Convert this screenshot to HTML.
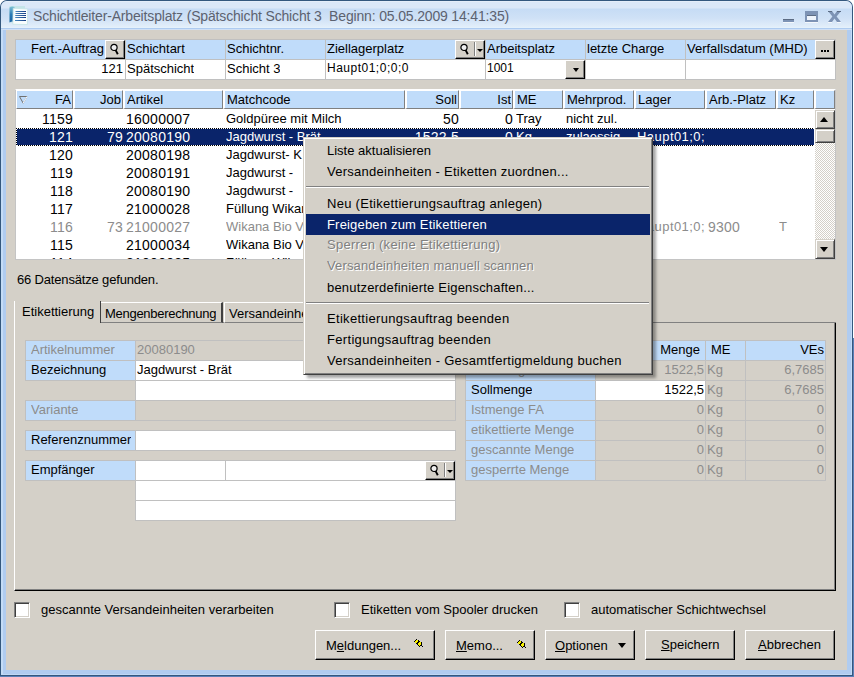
<!DOCTYPE html><html><head><meta charset="utf-8"><style>
*{box-sizing:border-box;margin:0;padding:0}
html,body{width:854px;height:677px;overflow:hidden;background:#fff;font-family:"Liberation Sans",sans-serif;font-size:13px;color:#000}
.ab{position:absolute}
.t{position:absolute;white-space:pre;line-height:18px;height:18px;overflow:hidden}
.r{text-align:right}
.g{color:#8c8c8c}
.btn{position:absolute;background:#d4d0c8;border-top:1px solid #fff;border-left:1px solid #fff;border-right:1px solid #000;border-bottom:1px solid #000;box-shadow:inset -1px -1px 0 #808080}
.hd{position:absolute;background:#c0dcfa;border-left:1px solid #fff;border-top:1px solid #fff;border-right:1px solid #808080;border-bottom:1px solid #808080}
</style></head><body>
<div class="ab" style="left:853px;top:0;width:1px;height:338px;background:#fff"></div>
<div class="ab" style="left:853px;top:338px;width:1px;height:339px;background:#5a80b8"></div>
<div class="ab" style="left:0;top:0;width:853px;height:677px;border:1px solid #34587e;border-bottom:0;border-radius:7px 7px 0 0;background:#b0ccf0"></div>
<div class="ab" style="left:1px;top:1px;width:851px;height:29px;border-radius:6px 6px 0 0;background:linear-gradient(#eef4fb 0,#dbe8f8 1px,#dbe8f8 7px,#c6dcf5 8px,#cfe1f6 17px,#e2eefa 26px,#e6f4fc 27px,#aecbf0 27px,#aecbf0 28px,#d0e0f5 28px)"></div>
<div class="ab" style="left:1px;top:30px;width:2px;height:644px;background:#c4dcf6"></div>
<div class="ab" style="left:851px;top:30px;width:1px;height:644px;background:#c4dcf8"></div>
<div class="ab" style="left:1px;top:674px;width:851px;height:1px;background:#c0d8f5"></div>
<div class="ab" style="left:0;top:675px;width:853px;height:1px;background:#34587e"></div>
<div class="ab" style="left:0;top:676px;width:854px;height:1px;background:#5a80b8"></div>
<div class="ab" style="left:6px;top:30px;width:841px;height:640px;background:#d4d0c8"></div>
<svg class="ab" style="left:8px;top:5px" width="22" height="22" viewBox="0 0 22 22">
<defs><linearGradient id="sp" x1="0" x2="0" y1="0" y2="1"><stop offset="0" stop-color="#7cc0d4"/><stop offset="0.5" stop-color="#2a7cb4"/><stop offset="1" stop-color="#1a64a4"/></linearGradient>
<linearGradient id="ln" x1="0" x2="1" y1="0" y2="0"><stop offset="0" stop-color="#4a8cc0"/><stop offset="1" stop-color="#143c84"/></linearGradient></defs>
<path d="M1.5 1 L17 1 L17 17.5 L1.5 17.5 Z" fill="#c4e4e8"/>
<path d="M1.5 2.5 Q4 1 6.5 2 L6.5 17 Q4 16 1.5 17.5 Z" fill="url(#sp)"/>
<path d="M5.2 3.2 L19.6 4 L19.4 19.6 L4.8 19.2 Z" fill="#f8fdfd" stroke="#c4e4e4" stroke-width="0.8"/>
<path d="M7.5 6.5 H18 M7.5 8.5 H18 M7.2 10.5 H18 M7.2 12.5 H18 M7 15.5 H18" stroke="url(#ln)" stroke-width="1.2"/>
</svg>
<div class="t" style="left:33px;top:7px;font-size:14px;line-height:18px;height:20px;color:#5c6270;letter-spacing:-0.16px">Schichtleiter-Arbeitsplatz (Spätschicht Schicht 3  Beginn: 05.05.2009 14:41:35)</div>
<div class="ab" style="left:783px;top:19px;width:11px;height:3px;background:#7d93b5;border-top:1px solid #5c6c84;box-shadow:0 1px 0 #f4f8fc"></div>
<div class="ab" style="left:805px;top:11px;width:13px;height:11px;border:2px solid #7d93b5;border-top:4px solid #7d93b5;background:#eef4fc;box-shadow:inset 0 1px 0 #5c6c84,0 1px 0 #f4f8fc"></div>
<svg class="ab" style="left:828px;top:11px" width="14" height="12" viewBox="0 0 14 12"><path d="M0 0 H4 L6.5 3.6 L9 0 H13 L8.6 5.5 L13 11 H9 L6.5 7.4 L4 11 H0 L4.4 5.5 Z" fill="#7d93b5"/><path d="M0 0.5 H4 M9 0.5 H13" stroke="#5c6c84" stroke-width="1"/><path d="M0 11.5 H4 M9 11.5 H13" stroke="#f4f8fc" stroke-width="1"/></svg>
<div class="ab" style="left:15px;top:39px;width:821px;height:41px;background:#fff;border:1px solid #c0c0c0"></div>
<div class="ab" style="left:16px;top:40px;width:819px;height:20px;background:#c0dcfa;border-bottom:1px solid #c0c0c0"></div>
<div class="ab" style="left:125px;top:40px;width:1px;height:39px;background:#c0c0c0"></div>
<div class="ab" style="left:225px;top:40px;width:1px;height:39px;background:#c0c0c0"></div>
<div class="ab" style="left:325px;top:40px;width:1px;height:39px;background:#c0c0c0"></div>
<div class="ab" style="left:485px;top:40px;width:1px;height:39px;background:#c0c0c0"></div>
<div class="ab" style="left:585px;top:40px;width:1px;height:39px;background:#c0c0c0"></div>
<div class="ab" style="left:685px;top:40px;width:1px;height:39px;background:#c0c0c0"></div>
<div class="t r" style="left:16px;top:39px;width:88px;line-height:19px">Fert.-Auftrag</div>
<div class="t" style="left:127px;top:39px;line-height:19px">Schichtart</div>
<div class="t" style="left:227px;top:39px;line-height:19px">Schichtnr.</div>
<div class="t" style="left:327px;top:39px;line-height:19px">Ziellagerplatz</div>
<div class="t" style="left:487px;top:39px;line-height:19px">Arbeitsplatz</div>
<div class="t" style="left:587px;top:39px;line-height:19px">letzte Charge</div>
<div class="t" style="left:687px;top:39px;line-height:19px">Verfallsdatum (MHD)</div>
<div class="btn" style="left:105px;top:40px;width:20px;height:19px"></div>
<svg class="ab" style="left:110px;top:43px" width="12" height="13" viewBox="0 0 12 13"><circle cx="4.0" cy="4.4" r="3.1" fill="#eeeeee" stroke="#000" stroke-width="1.2"/><path d="M5.6 7.1 L7.8 11.2" stroke="#000" stroke-width="1.9"/></svg>
<div class="btn" style="left:455px;top:40px;width:30px;height:19px"></div>
<svg class="ab" style="left:460px;top:43px" width="12" height="13" viewBox="0 0 12 13"><circle cx="4.0" cy="4.4" r="3.1" fill="#eeeeee" stroke="#000" stroke-width="1.2"/><path d="M5.6 7.1 L7.8 11.2" stroke="#000" stroke-width="1.9"/></svg>
<div class="ab" style="left:474px;top:42px;width:1px;height:14px;background:#808080"></div><div class="ab" style="left:475px;top:42px;width:1px;height:14px;background:#fff"></div>
<div class="ab" style="left:477px;top:49px;width:0;height:0;border-left:3px solid transparent;border-right:3px solid transparent;border-top:3px solid #000"></div>
<div class="btn" style="left:815px;top:40px;width:20px;height:19px"></div>
<div class="ab" style="left:821px;top:50px;width:2px;height:2px;background:#000"></div>
<div class="ab" style="left:824px;top:50px;width:2px;height:2px;background:#000"></div>
<div class="ab" style="left:827px;top:50px;width:2px;height:2px;background:#000"></div>
<div class="t r" style="left:16px;top:59px;width:107px;line-height:19px">121</div>
<div class="t" style="left:127px;top:59px;line-height:19px">Spätschicht</div>
<div class="t" style="left:227px;top:59px;line-height:19px">Schicht 3</div>
<div class="t" style="left:327px;top:59px;line-height:19px;font-size:12px;letter-spacing:0.5px">Haupt01;0;0;0</div>
<div class="t" style="left:487px;top:59px;line-height:19px;font-size:12px">1001</div>
<div class="btn" style="left:565px;top:60px;width:20px;height:19px"></div>
<div class="ab" style="left:573px;top:68px;width:0;height:0;border-left:3.5px solid transparent;border-right:3.5px solid transparent;border-top:4px solid #000"></div>
<div class="ab" style="left:15px;top:89px;width:821px;height:171px;background:#fff;border-top:1px solid #fff;border-left:1px solid #c4c4c4;border-right:1px solid #c4c4c4;border-bottom:1px solid #c4c4c4"></div>
<div class="hd" style="left:16px;top:90px;width:57px;height:19px;"></div>
<div class="t r" style="left:16px;top:90px;width:55px;line-height:19px">FA</div>
<div class="hd" style="left:73px;top:90px;width:50px;height:19px;border-left:2px solid #fff;"></div>
<div class="t r" style="left:73px;top:90px;width:48px;line-height:19px">Job</div>
<div class="hd" style="left:123px;top:90px;width:100px;height:19px;border-left:2px solid #fff;"></div>
<div class="t" style="left:127px;top:90px;line-height:19px">Artikel</div>
<div class="hd" style="left:223px;top:90px;width:182px;height:19px;border-left:2px solid #fff;"></div>
<div class="t" style="left:227px;top:90px;line-height:19px">Matchcode</div>
<div class="hd" style="left:405px;top:90px;width:54px;height:19px;border-left:2px solid #fff;"></div>
<div class="t r" style="left:405px;top:90px;width:52px;line-height:19px">Soll</div>
<div class="hd" style="left:459px;top:90px;width:54px;height:19px;border-left:2px solid #fff;"></div>
<div class="t r" style="left:459px;top:90px;width:52px;line-height:19px">Ist</div>
<div class="hd" style="left:513px;top:90px;width:50px;height:19px;border-left:2px solid #fff;"></div>
<div class="t" style="left:517px;top:90px;line-height:19px">ME</div>
<div class="hd" style="left:563px;top:90px;width:71px;height:19px;border-left:2px solid #fff;"></div>
<div class="t" style="left:567px;top:90px;line-height:19px">Mehrprod.</div>
<div class="hd" style="left:634px;top:90px;width:71px;height:19px;border-left:2px solid #fff;"></div>
<div class="t" style="left:638px;top:90px;line-height:19px">Lager</div>
<div class="hd" style="left:705px;top:90px;width:71px;height:19px;border-left:2px solid #fff;"></div>
<div class="t" style="left:709px;top:90px;line-height:19px">Arb.-Platz</div>
<div class="hd" style="left:776px;top:90px;width:38px;height:19px;border-left:2px solid #fff;"></div>
<div class="t" style="left:780px;top:90px;line-height:19px">Kz</div>
<div class="hd" style="left:814px;top:90px;width:21px;height:19px;border-left:2px solid #fff"></div>
<svg class="ab" style="left:19px;top:96px" width="9" height="8" viewBox="0 0 9 8"><path d="M0.5 0.5 H8 L4.2 7.2 Z" fill="none" stroke="#707070" stroke-width="1"/><path d="M8 0.5 L4.2 7.2" stroke="#fff" stroke-width="1"/></svg>
<div class="ab" style="left:16px;top:109px;width:799px;height:150px;overflow:hidden">
<div class="t r" style="left:0px;top:1px;width:57px;color:#000;font-size:14px;letter-spacing:0.25px;">1159</div>
<div class="t" style="left:110px;top:1px;width:97px;color:#000;font-size:14px;letter-spacing:0.25px;">16000007</div>
<div class="t" style="left:210px;top:1px;width:179px;color:#000;">Goldpüree mit Milch</div>
<div class="t r" style="left:389px;top:1px;width:54px;color:#000;font-size:14px;letter-spacing:0.25px;">50</div>
<div class="t r" style="left:443px;top:1px;width:54px;color:#000;font-size:14px;letter-spacing:0.25px;">0</div>
<div class="t" style="left:500px;top:1px;width:47px;color:#000;">Tray</div>
<div class="t" style="left:550px;top:1px;width:68px;color:#000;">nicht zul.</div>
<div class="ab" style="left:0;top:19px;width:798px;height:18px;background:#0a246a"></div>
<div class="ab" style="left:0;top:19px;width:798px;height:1px;background:repeating-linear-gradient(90deg,#000 0 1px,#fff 1px 2px)"></div>
<div class="ab" style="left:0;top:36px;width:798px;height:1px;background:repeating-linear-gradient(90deg,#000 0 1px,#fff 1px 2px)"></div>
<div class="ab" style="left:0;top:19px;width:1px;height:18px;background:repeating-linear-gradient(180deg,#000 0 1px,#fff 1px 2px)"></div>
<div class="t r" style="left:0px;top:19px;width:57px;color:#fff;font-size:14px;letter-spacing:0.25px;">121</div>
<div class="t r" style="left:57px;top:19px;width:50px;color:#fff;font-size:14px;letter-spacing:0.25px;">79</div>
<div class="t" style="left:110px;top:19px;width:97px;color:#fff;font-size:14px;letter-spacing:0.25px;">20080190</div>
<div class="t" style="left:210px;top:19px;width:179px;color:#fff;">Jagdwurst - Brät</div>
<div class="t r" style="left:389px;top:19px;width:54px;color:#fff;font-size:14px;letter-spacing:0.25px;">1522,5</div>
<div class="t r" style="left:443px;top:19px;width:54px;color:#fff;font-size:14px;letter-spacing:0.25px;">0</div>
<div class="t" style="left:500px;top:19px;width:47px;color:#fff;">Kg</div>
<div class="t" style="left:550px;top:19px;width:68px;color:#fff;">zulaessig</div>
<div class="t" style="left:621px;top:19px;width:68px;color:#fff;letter-spacing:0.45px;">Haupt01;0;</div>
<div class="t r" style="left:0px;top:37px;width:57px;color:#000;font-size:14px;letter-spacing:0.25px;">120</div>
<div class="t" style="left:110px;top:37px;width:97px;color:#000;font-size:14px;letter-spacing:0.25px;">20080198</div>
<div class="t" style="left:210px;top:37px;width:179px;color:#000;">Jagdwurst- K</div>
<div class="t r" style="left:0px;top:55px;width:57px;color:#000;font-size:14px;letter-spacing:0.25px;">119</div>
<div class="t" style="left:110px;top:55px;width:97px;color:#000;font-size:14px;letter-spacing:0.25px;">20080191</div>
<div class="t" style="left:210px;top:55px;width:179px;color:#000;">Jagdwurst - </div>
<div class="t r" style="left:0px;top:73px;width:57px;color:#000;font-size:14px;letter-spacing:0.25px;">118</div>
<div class="t" style="left:110px;top:73px;width:97px;color:#000;font-size:14px;letter-spacing:0.25px;">20080190</div>
<div class="t" style="left:210px;top:73px;width:179px;color:#000;">Jagdwurst - </div>
<div class="t r" style="left:0px;top:91px;width:57px;color:#000;font-size:14px;letter-spacing:0.25px;">117</div>
<div class="t" style="left:110px;top:91px;width:97px;color:#000;font-size:14px;letter-spacing:0.25px;">21000028</div>
<div class="t" style="left:210px;top:91px;width:179px;color:#000;">Füllung Wikana</div>
<div class="t r" style="left:0px;top:109px;width:57px;color:#8c8c8c;font-size:14px;letter-spacing:0.25px;">116</div>
<div class="t r" style="left:57px;top:109px;width:50px;color:#8c8c8c;font-size:14px;letter-spacing:0.25px;">73</div>
<div class="t" style="left:110px;top:109px;width:97px;color:#8c8c8c;font-size:14px;letter-spacing:0.25px;">21000027</div>
<div class="t" style="left:210px;top:109px;width:179px;color:#8c8c8c;">Wikana Bio V</div>
<div class="t" style="left:621px;top:109px;width:68px;color:#8c8c8c;letter-spacing:0.45px;">Haupt01;0;</div>
<div class="t" style="left:692px;top:109px;width:68px;color:#8c8c8c;font-size:14px;letter-spacing:0.25px;">9300</div>
<div class="t" style="left:763px;top:109px;width:35px;color:#8c8c8c;">T</div>
<div class="t r" style="left:0px;top:127px;width:57px;color:#000;font-size:14px;letter-spacing:0.25px;">115</div>
<div class="t" style="left:110px;top:127px;width:97px;color:#000;font-size:14px;letter-spacing:0.25px;">21000034</div>
<div class="t" style="left:210px;top:127px;width:179px;color:#000;">Wikana Bio V</div>
<div class="t r" style="left:0px;top:145px;width:57px;color:#000;font-size:14px;letter-spacing:0.25px;">114</div>
<div class="t" style="left:110px;top:145px;width:97px;color:#000;font-size:14px;letter-spacing:0.25px;">21000035</div>
<div class="t" style="left:210px;top:145px;width:179px;color:#000;">Füllung Wikana</div>
</div>
<div class="ab" style="left:815px;top:110px;width:20px;height:149px;background-color:#e8e6e2;background-image:repeating-conic-gradient(#d4d0c8 0 25%,#fff 0 50%);background-size:2px 2px"></div>
<div class="btn" style="left:815px;top:110px;width:20px;height:19px;border-color:#d4d0c8 #404040 #404040 #d4d0c8;box-shadow:inset 1px 1px 0 #fff,inset -1px -1px 0 #808080"></div>
<div class="ab" style="left:820px;top:117px;width:0;height:0;border-left:4.5px solid transparent;border-right:4.5px solid transparent;border-bottom:5px solid #000"></div>
<div class="btn" style="left:815px;top:129px;width:20px;height:14px;border-color:#d4d0c8 #404040 #404040 #d4d0c8;box-shadow:inset 1px 1px 0 #fff,inset -1px -1px 0 #808080"></div>
<div class="btn" style="left:815px;top:239px;width:20px;height:20px;border-color:#d4d0c8 #404040 #404040 #d4d0c8;box-shadow:inset 1px 1px 0 #fff,inset -1px -1px 0 #808080"></div>
<div class="ab" style="left:820px;top:247px;width:0;height:0;border-left:4.5px solid transparent;border-right:4.5px solid transparent;border-top:5px solid #000"></div>
<div class="t" style="left:17px;top:271px;letter-spacing:-0.17px">66 Datensätze gefunden.</div>
<div class="ab" style="left:14px;top:322px;width:822px;height:269px;border-left:1px solid #fff;border-top:1px solid #fff;border-right:1px solid #000;border-bottom:1px solid #000;box-shadow:inset -1px -1px 0 #808080"></div>
<div class="ab" style="left:100px;top:322px;width:735px;height:1px;background:#808080"></div>
<div class="ab" style="left:100px;top:302px;width:123px;height:21px;border-top:1px solid #fff;border-left:1px solid #fff;border-right:2px solid #404040;border-bottom:1px solid #808080;background:#d4d0c8"></div>
<div class="ab" style="left:100px;top:301px;width:1px;height:22px;background:#404040"></div>
<div class="t" style="left:105px;top:305px;letter-spacing:-0.28px">Mengenberechnung</div>
<div class="ab" style="left:224px;top:302px;width:124px;height:21px;border-left:1px solid #fff;border-top:1px solid #fff;border-right:1px solid #404040;border-bottom:1px solid #808080;background:#d4d0c8"></div>
<div class="t" style="left:229px;top:305px">Versandeinheiten</div>
<div class="ab" style="left:14px;top:301px;width:86px;height:23px;border-left:1px solid #fff;background:#d4d0c8"></div>
<div class="t" style="left:22px;top:303px">Etikettierung</div>
<div class="ab" style="left:135px;top:340px;width:321px;height:21px;background:#d4d0c8;border:1px solid #c0c0c0"></div>
<div class="t g" style="left:137px;top:340px;line-height:19px">20080190</div>
<div class="ab" style="left:25px;top:340px;width:111px;height:21px;background:#c0dcfa;border:1px solid #c0c0c0"></div>
<div class="t g" style="left:31px;top:340px;line-height:19px">Artikelnummer</div>
<div class="ab" style="left:135px;top:360px;width:321px;height:21px;background:#fff;border:1px solid #c0c0c0"></div>
<div class="t" style="left:137px;top:360px;line-height:19px">Jagdwurst - Brät</div>
<div class="ab" style="left:25px;top:360px;width:111px;height:21px;background:#c0dcfa;border:1px solid #c0c0c0"></div>
<div class="t" style="left:31px;top:360px;line-height:19px">Bezeichnung</div>
<div class="ab" style="left:135px;top:380px;width:321px;height:21px;background:#fff;border:1px solid #c0c0c0"></div>
<div class="ab" style="left:135px;top:400px;width:321px;height:21px;background:#d4d0c8;border:1px solid #c0c0c0"></div>
<div class="ab" style="left:25px;top:400px;width:111px;height:21px;background:#c0dcfa;border:1px solid #c0c0c0"></div>
<div class="t g" style="left:31px;top:400px;line-height:19px">Variante</div>
<div class="ab" style="left:135px;top:430px;width:321px;height:21px;background:#fff;border:1px solid #c0c0c0"></div>
<div class="ab" style="left:25px;top:430px;width:111px;height:21px;background:#c0dcfa;border:1px solid #c0c0c0"></div>
<div class="t" style="left:31px;top:430px;line-height:19px">Referenznummer</div>
<div class="ab" style="left:135px;top:460px;width:91px;height:21px;background:#fff;border:1px solid #c0c0c0"></div>
<div class="ab" style="left:225px;top:460px;width:231px;height:21px;background:#fff;border:1px solid #c0c0c0"></div>
<div class="ab" style="left:25px;top:460px;width:111px;height:21px;background:#c0dcfa;border:1px solid #c0c0c0"></div>
<div class="t" style="left:31px;top:460px;line-height:19px">Empfänger</div>
<div class="btn" style="left:425px;top:461px;width:30px;height:19px"></div>
<svg class="ab" style="left:430px;top:464px" width="12" height="13" viewBox="0 0 12 13"><circle cx="4.0" cy="4.4" r="3.1" fill="#eeeeee" stroke="#000" stroke-width="1.2"/><path d="M5.6 7.1 L7.8 11.2" stroke="#000" stroke-width="1.9"/></svg>
<div class="ab" style="left:444px;top:463px;width:1px;height:14px;background:#808080"></div><div class="ab" style="left:445px;top:463px;width:1px;height:14px;background:#fff"></div>
<div class="ab" style="left:447px;top:470px;width:0;height:0;border-left:3px solid transparent;border-right:3px solid transparent;border-top:3px solid #000"></div>
<div class="ab" style="left:135px;top:480px;width:321px;height:21px;background:#fff;border:1px solid #c0c0c0"></div>
<div class="ab" style="left:135px;top:500px;width:321px;height:21px;background:#fff;border:1px solid #c0c0c0"></div>
<div class="ab" style="left:465px;top:340px;width:361px;height:141px;background:#d4d0c8;border:1px solid #c0c0c0"></div>
<div class="ab" style="left:466px;top:341px;width:359px;height:19px;background:#c0dcfa"></div>
<div class="ab" style="left:466px;top:360px;width:359px;height:1px;background:#c0c0c0"></div>
<div class="ab" style="left:466px;top:361px;width:130px;height:19px;background:#c0dcfa"></div>
<div class="ab" style="left:466px;top:380px;width:359px;height:1px;background:#c0c0c0"></div>
<div class="ab" style="left:466px;top:381px;width:130px;height:19px;background:#c0dcfa"></div>
<div class="ab" style="left:466px;top:400px;width:359px;height:1px;background:#c0c0c0"></div>
<div class="ab" style="left:466px;top:401px;width:130px;height:19px;background:#c0dcfa"></div>
<div class="ab" style="left:466px;top:420px;width:359px;height:1px;background:#c0c0c0"></div>
<div class="ab" style="left:466px;top:421px;width:130px;height:19px;background:#c0dcfa"></div>
<div class="ab" style="left:466px;top:440px;width:359px;height:1px;background:#c0c0c0"></div>
<div class="ab" style="left:466px;top:441px;width:130px;height:19px;background:#c0dcfa"></div>
<div class="ab" style="left:466px;top:460px;width:359px;height:1px;background:#c0c0c0"></div>
<div class="ab" style="left:466px;top:461px;width:130px;height:19px;background:#c0dcfa"></div>
<div class="ab" style="left:595px;top:341px;width:1px;height:139px;background:#c0c0c0"></div>
<div class="ab" style="left:705px;top:341px;width:1px;height:139px;background:#c0c0c0"></div>
<div class="ab" style="left:745px;top:341px;width:1px;height:139px;background:#c0c0c0"></div>
<div class="ab" style="left:596px;top:381px;width:109px;height:19px;background:#fff"></div>
<div class="t r" style="left:596px;top:340px;width:104px;line-height:19px">Menge</div>
<div class="t" style="left:711px;top:340px;line-height:19px">ME</div>
<div class="t r" style="left:746px;top:340px;width:78px;line-height:19px">VEs</div>
<div class="t g" style="left:471px;top:360px;line-height:19px">Sollmenge?</div>
<div class="t r g" style="left:596px;top:360px;width:108px;line-height:19px">1522,5</div>
<div class="t g" style="left:707px;top:360px;line-height:19px">Kg</div>
<div class="t r g" style="left:746px;top:360px;width:78px;line-height:19px">6,7685</div>
<div class="t" style="left:471px;top:380px;line-height:19px">Sollmenge</div>
<div class="t r" style="left:596px;top:380px;width:108px;line-height:19px">1522,5</div>
<div class="t g" style="left:707px;top:380px;line-height:19px">Kg</div>
<div class="t r g" style="left:746px;top:380px;width:78px;line-height:19px">6,7685</div>
<div class="t g" style="left:471px;top:400px;line-height:19px">Istmenge FA</div>
<div class="t r g" style="left:596px;top:400px;width:108px;line-height:19px">0</div>
<div class="t g" style="left:707px;top:400px;line-height:19px">Kg</div>
<div class="t r g" style="left:746px;top:400px;width:78px;line-height:19px">0</div>
<div class="t g" style="left:471px;top:420px;line-height:19px">etikettierte Menge</div>
<div class="t r g" style="left:596px;top:420px;width:108px;line-height:19px">0</div>
<div class="t g" style="left:707px;top:420px;line-height:19px">Kg</div>
<div class="t r g" style="left:746px;top:420px;width:78px;line-height:19px">0</div>
<div class="t g" style="left:471px;top:440px;line-height:19px">gescannte Menge</div>
<div class="t r g" style="left:596px;top:440px;width:108px;line-height:19px">0</div>
<div class="t g" style="left:707px;top:440px;line-height:19px">Kg</div>
<div class="t r g" style="left:746px;top:440px;width:78px;line-height:19px">0</div>
<div class="t g" style="left:471px;top:460px;line-height:19px">gesperrte Menge</div>
<div class="t r g" style="left:596px;top:460px;width:108px;line-height:19px">0</div>
<div class="t g" style="left:707px;top:460px;line-height:19px">Kg</div>
<div class="t r g" style="left:746px;top:460px;width:78px;line-height:19px">0</div>
<div class="ab" style="left:14px;top:602px;width:16px;height:16px;background:#fff;border-left:1px solid #808080;border-top:1px solid #808080;border-right:1px solid #fff;border-bottom:1px solid #fff;box-shadow:inset 1px 1px 0 #404040,inset -1px -1px 0 #d4d0c8"></div>
<div class="t" style="left:41px;top:601px">gescannte Versandeinheiten verarbeiten</div>
<div class="ab" style="left:334px;top:602px;width:16px;height:16px;background:#fff;border-left:1px solid #808080;border-top:1px solid #808080;border-right:1px solid #fff;border-bottom:1px solid #fff;box-shadow:inset 1px 1px 0 #404040,inset -1px -1px 0 #d4d0c8"></div>
<div class="t" style="left:361px;top:601px">Etiketten vom Spooler drucken</div>
<div class="ab" style="left:564px;top:602px;width:16px;height:16px;background:#fff;border-left:1px solid #808080;border-top:1px solid #808080;border-right:1px solid #fff;border-bottom:1px solid #fff;box-shadow:inset 1px 1px 0 #404040,inset -1px -1px 0 #d4d0c8"></div>
<div class="t" style="left:591px;top:601px">automatischer Schichtwechsel</div>
<div class="btn" style="left:315px;top:630px;width:120px;height:30px"></div>
<div class="t" style="left:326px;top:637px">M<u>e</u>ldungen...</div>
<svg class="ab" style="left:414px;top:639px" width="9" height="8" shape-rendering="crispEdges"><rect x="2" y="0" width="1" height="1" fill="#000"/><rect x="1" y="1" width="1" height="1" fill="#000"/><rect x="2" y="1" width="2" height="1" fill="#f8f000"/><rect x="4" y="1" width="1" height="1" fill="#000"/><rect x="0" y="2" width="1" height="1" fill="#000"/><rect x="1" y="2" width="3" height="1" fill="#f8f000"/><rect x="4" y="2" width="2" height="1" fill="#000"/><rect x="1" y="3" width="2" height="1" fill="#f8f000"/><rect x="3" y="3" width="2" height="1" fill="#000"/><rect x="5" y="3" width="2" height="1" fill="#f8f000"/><rect x="7" y="3" width="1" height="1" fill="#000"/><rect x="2" y="4" width="2" height="1" fill="#000"/><rect x="4" y="4" width="3" height="1" fill="#f8f000"/><rect x="7" y="4" width="1" height="1" fill="#000"/><rect x="3" y="5" width="1" height="1" fill="#000"/><rect x="4" y="5" width="3" height="1" fill="#f8f000"/><rect x="7" y="5" width="1" height="1" fill="#000"/><rect x="4" y="6" width="1" height="1" fill="#000"/><rect x="5" y="6" width="1" height="1" fill="#f8f000"/><rect x="6" y="6" width="2" height="1" fill="#000"/><rect x="5" y="7" width="1" height="1" fill="#000"/><rect x="8" y="7" width="1" height="1" fill="#000"/></svg>
<div class="btn" style="left:445px;top:630px;width:90px;height:30px"></div>
<div class="t" style="left:456px;top:637px"><u>M</u>emo...</div>
<svg class="ab" style="left:517px;top:640px" width="9" height="8" shape-rendering="crispEdges"><rect x="2" y="0" width="1" height="1" fill="#000"/><rect x="1" y="1" width="1" height="1" fill="#000"/><rect x="2" y="1" width="2" height="1" fill="#f8f000"/><rect x="4" y="1" width="1" height="1" fill="#000"/><rect x="0" y="2" width="1" height="1" fill="#000"/><rect x="1" y="2" width="3" height="1" fill="#f8f000"/><rect x="4" y="2" width="2" height="1" fill="#000"/><rect x="1" y="3" width="2" height="1" fill="#f8f000"/><rect x="3" y="3" width="2" height="1" fill="#000"/><rect x="5" y="3" width="2" height="1" fill="#f8f000"/><rect x="7" y="3" width="1" height="1" fill="#000"/><rect x="2" y="4" width="2" height="1" fill="#000"/><rect x="4" y="4" width="3" height="1" fill="#f8f000"/><rect x="7" y="4" width="1" height="1" fill="#000"/><rect x="3" y="5" width="1" height="1" fill="#000"/><rect x="4" y="5" width="3" height="1" fill="#f8f000"/><rect x="7" y="5" width="1" height="1" fill="#000"/><rect x="4" y="6" width="1" height="1" fill="#000"/><rect x="5" y="6" width="1" height="1" fill="#f8f000"/><rect x="6" y="6" width="2" height="1" fill="#000"/><rect x="5" y="7" width="1" height="1" fill="#000"/><rect x="8" y="7" width="1" height="1" fill="#000"/></svg>
<div class="btn" style="left:545px;top:630px;width:90px;height:30px"></div>
<div class="t" style="left:555px;top:637px"><u>O</u>ptionen</div>
<div class="ab" style="left:618px;top:643px;width:0;height:0;border-left:4.5px solid transparent;border-right:4.5px solid transparent;border-top:5px solid #000"></div>
<div class="btn" style="left:645px;top:630px;width:90px;height:30px"></div>
<div class="t" style="left:661px;top:636px"><u>S</u>peichern</div>
<div class="btn" style="left:745px;top:630px;width:90px;height:30px"></div>
<div class="t" style="left:758px;top:636px"><u>A</u>bbrechen</div>
<div class="ab" style="left:307px;top:141px;width:349px;height:237px;background:rgba(0,0,0,0.35);filter:blur(1.5px)"></div>
<div class="ab" style="left:303px;top:137px;width:350px;height:238px;background:#d4d0c8;border-left:1px solid #d4d0c8;border-top:1px solid #d4d0c8;border-right:1px solid #404040;border-bottom:1px solid #404040;box-shadow:inset 1px 1px 0 #fff,inset -1px -1px 0 #808080"></div>
<div class="t" style="left:327px;top:141px;line-height:19px;letter-spacing:0px">Liste aktualisieren</div>
<div class="t" style="left:327px;top:162px;line-height:19px;letter-spacing:0.26px">Versandeinheiten - Etiketten zuordnen...</div>
<div class="ab" style="left:306px;top:186px;width:343px;height:1px;background:#808080"></div><div class="ab" style="left:306px;top:187px;width:343px;height:1px;background:#fff"></div>
<div class="t" style="left:327px;top:194px;line-height:19px;letter-spacing:0.29px">Neu (Etikettierungsauftrag anlegen)</div>
<div class="ab" style="left:306px;top:214px;width:344px;height:21px;background:#0a246a"></div>
<div class="t" style="left:327px;top:215px;line-height:19px;color:#fff;letter-spacing:0.18px">Freigeben zum Etikettieren</div>
<div class="t" style="left:328px;top:236px;line-height:19px;color:#fff;letter-spacing:0.27px">Sperren (keine Etikettierung)</div>
<div class="t" style="left:327px;top:235px;line-height:19px;color:#808080;letter-spacing:0.27px">Sperren (keine Etikettierung)</div>
<div class="t" style="left:328px;top:257px;line-height:19px;color:#fff;letter-spacing:0.14px">Versandeinheiten manuell scannen</div>
<div class="t" style="left:327px;top:256px;line-height:19px;color:#808080;letter-spacing:0.14px">Versandeinheiten manuell scannen</div>
<div class="t" style="left:327px;top:278px;line-height:19px;letter-spacing:0.19px">benutzerdefinierte Eigenschaften...</div>
<div class="ab" style="left:306px;top:302px;width:343px;height:1px;background:#808080"></div><div class="ab" style="left:306px;top:303px;width:343px;height:1px;background:#fff"></div>
<div class="t" style="left:327px;top:309px;line-height:19px;letter-spacing:0.31px">Etikettierungsauftrag beenden</div>
<div class="t" style="left:327px;top:330px;line-height:19px;letter-spacing:0.32px">Fertigungsauftrag beenden</div>
<div class="t" style="left:327px;top:351px;line-height:19px;letter-spacing:0.27px">Versandeinheiten - Gesamtfertigmeldung buchen</div>
</body></html>
